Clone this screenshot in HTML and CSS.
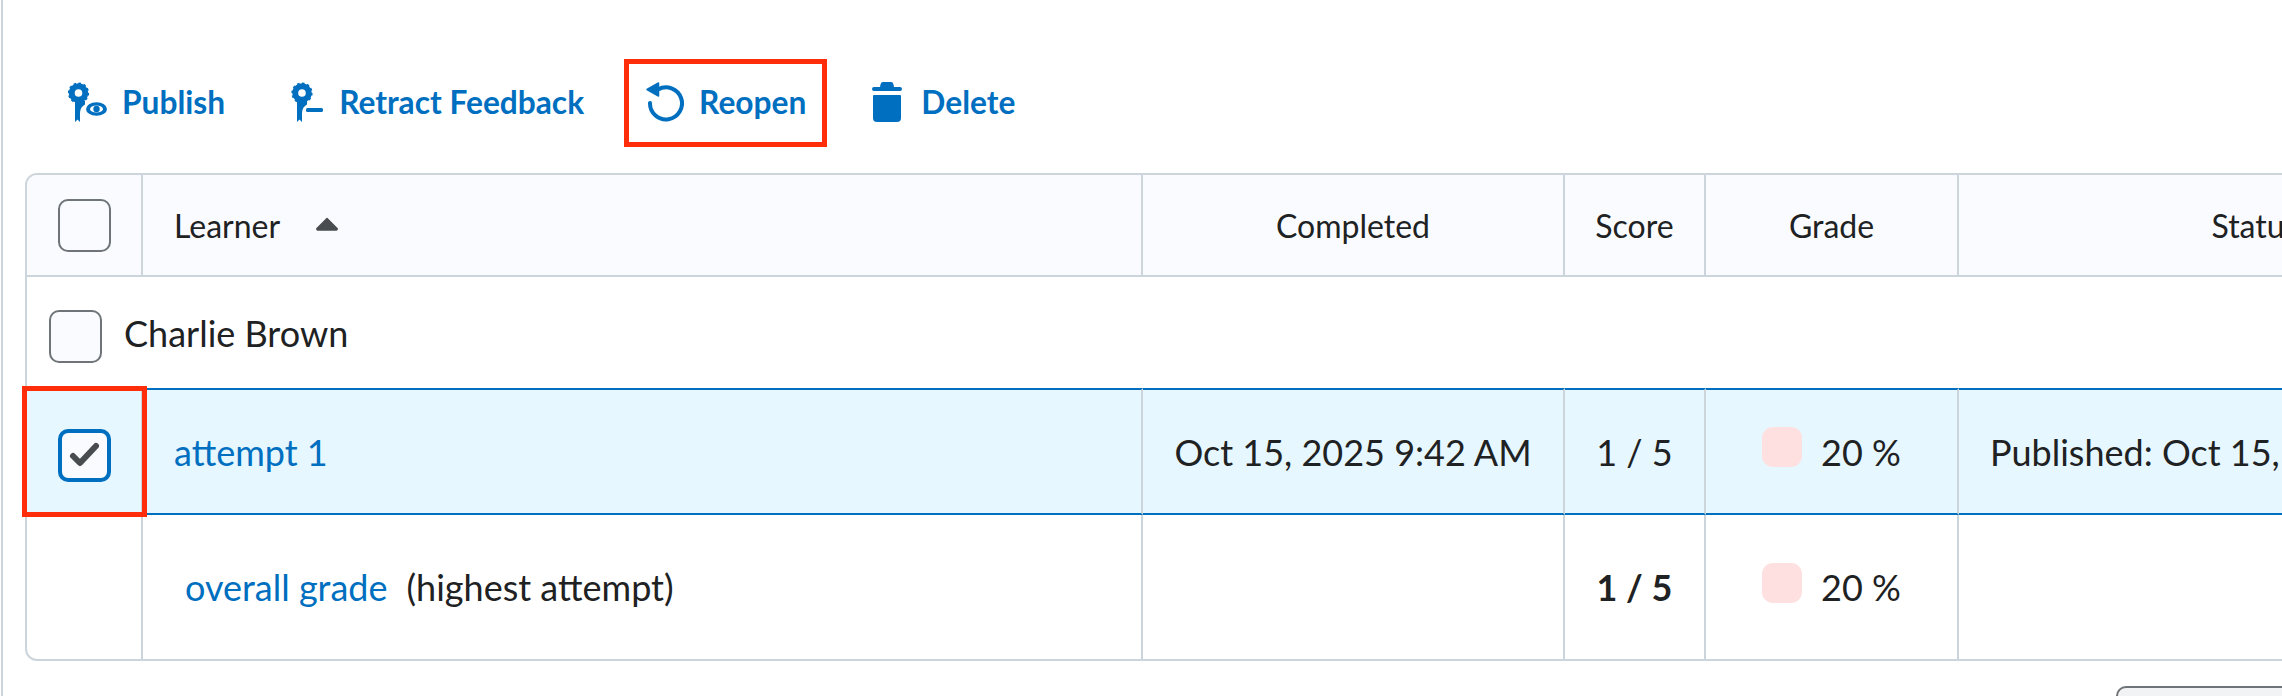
FILE: index.html
```html
<!DOCTYPE html>
<html lang="en">
<head>
  <meta charset="UTF-8">
  <title>Attempts</title>
  <link rel="stylesheet" href="styles.css">
</head>
<body>
  <div class="page">
    <div class="toolbar">
      <a class="tool tool-publish">
        <svg class="tool-icon" width="40" height="40" viewBox="0 0 40 40">
          <circle cx="10.500" cy="11" r="6.800" fill="none" stroke="#006fbf" stroke-width="6"/>
          <circle cx="10.500" cy="11" r="9.800" fill="none" stroke="#006fbf" stroke-width="1.600" stroke-dasharray="2.600 2.500"/>
          <path d="M7 19h10v3.500c-3 1.500-5 4.500-5 8.500v9l-2.500-2.500L7 40z"/>
          <ellipse cx="28.500" cy="27" rx="10.500" ry="6.800"/>
          <ellipse cx="28.500" cy="27" rx="6.500" ry="3.600" fill="#fff"/>
          <circle cx="28.500" cy="27" r="3.200"/>
        </svg>
        Publish
      </a>
      <a class="tool tool-retract">
        <svg class="tool-icon" width="32" height="40" viewBox="0 0 32 40">
          <circle cx="11" cy="11" r="6.800" fill="none" stroke="#006fbf" stroke-width="6"/>
          <circle cx="11" cy="11" r="9.800" fill="none" stroke="#006fbf" stroke-width="1.600" stroke-dasharray="2.600 2.500"/>
          <path d="M6 19h10v3.500c-3 1.500-5 4.500-5 8.500v9l-2.500-2.500L6 40z"/>
          <rect x="15" y="26" width="17" height="4" rx="1.500"/>
        </svg>
        Retract Feedback
      </a>
      <a class="tool tool-reopen marked">
        <svg class="tool-icon" width="38" height="40" viewBox="0 0 38 40">
          <path d="M12 7.500A16 16 0 1 1 4 21" fill="none" stroke="#006fbf" stroke-width="4" stroke-linecap="round"/>
          <path d="M12.500 1v13L1 7.500z" stroke="#006fbf" stroke-width="1.500" stroke-linejoin="round"/>
        </svg>
        Reopen
      </a>
      <a class="tool tool-delete">
        <svg class="tool-icon" width="30" height="40" viewBox="0 0 30 40">
          <path d="M8 5.500C8.300 2 9 0 11 0h8c2 0 2.700 2 3 5.500z"/>
          <rect x="0" y="5" width="30" height="4" rx="2"/>
          <path d="M2 13h26a1 1 0 0 1 1 1v22a4 4 0 0 1-4 4H5a4 4 0 0 1-4-4V14a1 1 0 0 1 1-1z"/>
        </svg>
        Delete
      </a>
    </div>

    <div class="table-clip">
      <table class="attempts">
        <colgroup>
          <col class="col-check"><col class="col-learner"><col class="col-completed"><col class="col-score"><col class="col-grade"><col class="col-status">
        </colgroup>
        <thead>
          <tr>
            <th class="check-cell"><span class="checkbox"></span></th>
            <th class="learner-head">
              <span class="learner-label">Learner
                <svg class="sort-arrow" width="22" height="14" viewBox="0 0 22 14"><path d="M11 1.500L21 11.500a1 1 0 0 1-.8 1.500H1.800a1 1 0 0 1-.8-1.500z" fill="#494c4e" stroke="#494c4e" stroke-width="1.500" stroke-linejoin="round"/></svg>
              </span>
            </th>
            <th>Completed</th>
            <th>Score</th>
            <th>Grade</th>
            <th>Status</th>
          </tr>
        </thead>
        <tbody>
          <tr class="name-row">
            <td colspan="6">
              <div class="name-line"><span class="checkbox"></span><span>Charlie Brown</span></div>
            </td>
          </tr>
          <tr class="selected-row">
            <td class="check-cell marked"><span class="checkbox checked">
              <svg viewBox="0 0 45 45" class="tick"><path d="M11 23l7 7 16-17" fill="none" stroke="#494c4e" stroke-width="6" stroke-linecap="round" stroke-linejoin="round"/></svg>
            </span></td>
            <td class="link-cell"><a class="link">attempt 1</a></td>
            <td class="center">Oct 15, 2025 9:42 AM</td>
            <td class="center">1 / 5</td>
            <td class="center"><div class="grade"><span class="grade-dot"></span>20 %</div></td>
            <td class="status-cell">Published: Oct 15,</td>
          </tr>
          <tr class="overall-row">
            <td></td>
            <td class="overall-cell"><a class="link">overall grade</a><span class="note">(highest attempt)</span></td>
            <td></td>
            <td class="center"><b>1 / 5</b></td>
            <td class="center"><div class="grade"><span class="grade-dot"></span>20 %</div></td>
            <td></td>
          </tr>
        </tbody>
      </table>
    </div>

    <div class="footer-row"><span class="footer-button"></span></div>
  </div>
</body>
</html>
```

FILE: styles.css
```css
*, *::after {
  box-sizing: border-box;
}

html, body {
  margin: 0;
  height: 696px;
  overflow: hidden;
  background-color: #fff;
}

body {
  font-family: Lato, "Open Sans", sans-serif;
  color: #202122;
  font-size: 36px;
}

.page {
  width: 2281px;
  height: 696px;
  margin-left: 1px;
  border-left: 2px solid #cdd5dc;
  padding-top: 58px;
  overflow: hidden;
}

.toolbar {
  display: flex;
  align-items: center;
  height: 88px;
  padding-left: 65px;
}

.tool {
  display: flex;
  align-items: center;
  color: #006fbf;
  font-weight: 700;
  font-size: 31.7px;
  line-height: 36px;
}

.tool-icon {
  fill: #006fbf;
  flex-shrink: 0;
}

.tool-publish {
  gap: 14px;
}

.tool-retract {
  gap: 16px;
  margin-left: 66px;
}

.tool-reopen {
  gap: 15px;
  margin-left: 62px;
}

.tool-delete {
  gap: 19px;
  margin-left: 66px;
}

/* red annotations from the screenshot */
.marked {
  position: relative;
}

.tool.marked::after {
  content: "";
  position: absolute;
  left: -22px;
  top: -23px;
  width: 203px;
  height: 88px;
  border: 5px solid #ff2d0a;
}

.table-clip {
  margin-top: 27px;
  padding-left: 22px;
  overflow: hidden;
}

.attempts {
  width: 2526px;
  table-layout: fixed;
  border-collapse: separate;
  border-spacing: 0;
  border: 2px solid #cdd5dc;
  border-radius: 12px;
}

.col-check { width: 116px; }
.col-learner { width: 1000px; }
.col-completed { width: 422px; }
.col-score { width: 141px; }
.col-grade { width: 253px; }
.col-status { width: 592px; }

th {
  height: 102px;
  background-color: #f9fbff;
  font-size: 32px;
  font-weight: 400;
  text-align: center;
  border-bottom: 2px solid #cdd5dc;
  border-right: 2px solid #cdd5dc;
  padding: 0;
}

thead th:first-child {
  border-top-left-radius: 10px;
}

th:last-child, td:last-child {
  border-right: 0;
}

td {
  border-right: 2px solid #cdd5dc;
  padding: 0;
}

.learner-head {
  text-align: left;
  padding-left: 31px;
}

.learner-label {
  display: flex;
  align-items: center;
  gap: 36px;
}

.sort-arrow {
  margin-top: -2px;
}

.check-cell {
  text-align: center;
}

.checkbox {
  display: inline-block;
  width: 53px;
  height: 53px;
  border: 2px solid #6e7477;
  border-radius: 10px;
  background-color: #f9fbff;
  vertical-align: middle;
}

.name-row td {
  height: 111px;
  padding-left: 22px;
  border-right: 0;
}

.name-line {
  display: flex;
  align-items: center;
  gap: 22px;
}

.name-line .checkbox {
  margin-top: 8px;
}

.selected-row td {
  height: 127px;
  background-color: #e6f7ff;
  border-top: 2px solid #006fbf;
  border-bottom: 2px solid #006fbf;
}

.selected-row td.link-cell {
  padding-left: 31px;
}

td.center {
  text-align: center;
}

.selected-row .status-cell {
  padding-left: 31px;
  white-space: nowrap;
}

.check-cell.marked::after {
  content: "";
  position: absolute;
  left: -5px;
  top: -4px;
  width: 125px;
  height: 131px;
  border: 5px solid #ff2d0a;
}

.checkbox.checked {
  border: 4px solid #006fbf;
  margin-top: 8px;
}

.tick {
  display: block;
  width: 45px;
  height: 45px;
}

.link {
  color: #006fbf;
}

.grade {
  display: flex;
  align-items: center;
  justify-content: center;
  gap: 19px;
}

.grade-dot {
  width: 40px;
  height: 40px;
  border-radius: 11px;
  background-color: #ffe0e0;
  margin-top: -9px;
}

.overall-row td {
  height: 144px;
}

.overall-cell {
  padding-left: 42px;
}

.note {
  margin-left: 19px;
}

.footer-row {
  padding: 25px 0 0 2113px;
}

.footer-button {
  display: block;
  width: 220px;
  height: 60px;
  border: 2px solid #6e7477;
  border-radius: 10px;
  background-color: #f1f3f5;
}
```
